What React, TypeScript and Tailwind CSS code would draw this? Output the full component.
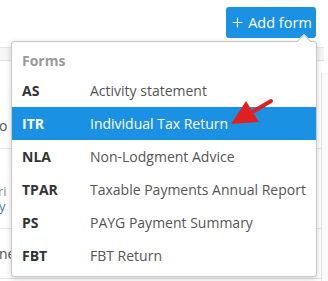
import { Plus } from "lucide-react";

const FORMS = [
  { code: "AS", label: "Activity statement" },
  { code: "ITR", label: "Individual Tax Return", active: true },
  { code: "NLA", label: "Non-Lodgment Advice" },
  { code: "TPAR", label: "Taxable Payments Annual Report" },
  { code: "PS", label: "PAYG Payment Summary" },
  { code: "FBT", label: "FBT Return" },
];

function Arrow() {
  return (
    <svg className="absolute left-[226px] top-[94px]" width="52" height="36" viewBox="0 0 52 36">
      <line x1="45" y1="7" x2="28" y2="17" stroke="#e0201f" strokeWidth="4" strokeLinecap="round" />
      <polygon points="5,30 20,7 33,28" fill="#e0201f" />
    </svg>
  );
}

export default function App() {
  return (
    <div
      className="relative h-[281px] w-[328px] overflow-hidden bg-white text-[#555]"
      style={{ fontFamily: '"Open Sans", sans-serif' }}
    >
      {/* page behind the menu */}
      <div className="flex h-[47px] justify-end pr-[12px] pt-[7px]">
        <button className="flex h-[31px] w-[90px] items-center justify-center gap-[3px] rounded-[3px] bg-[#1a91e3] text-[14.5px] text-white">
          <Plus className="h-[15px] w-[15px]" strokeWidth={1.8} />
          Add form
        </button>
      </div>
      <div className="mr-[4px] h-[14px] border-y border-[#e3e3e3] bg-[#f6f6f6]" />
      <div className="flex">
        <div className="flex-1">
          <div className="flex h-[87px] items-end pb-[15px] text-[14px] leading-none">
            <span className="-ml-[1px]">o</span>
          </div>
          <div className="flex h-[81px] flex-col justify-end border-y border-[#e3e3e3] pb-[14px] text-[13px] leading-[15px]">
            <span className="-ml-[2px] text-[#888]">ri</span>
            <span className="-ml-[1px] text-[#4a7cb0]">y</span>
          </div>
          <div className="flex h-[50px] items-center border-b border-[#e3e3e3] text-[14px]">
            <span className="-ml-[1px]">ne</span>
          </div>
        </div>
        <div className="mt-[12px] h-[240px] w-[7px] border-l border-[#e6e6e6] bg-[#fafafa]" />
      </div>

      {/* dropdown */}
      <div className="absolute left-[11px] top-[41px] w-[306px] rounded-[3px] border border-[#c8c8c8] bg-white shadow-[0_2px_6px_rgba(0,0,0,0.18)]">
        <div className="absolute -top-[6px] right-[7px] h-[10px] w-[10px] rotate-45 border-l border-t border-[#c8c8c8] bg-white" />
        <div className="flex h-[32px] items-center px-[10px] pt-[4px] text-[14px] font-bold text-[#9a9a9a]">Forms</div>
        <ul className="pb-[4px] text-[14px]">
          {FORMS.map((f) => (
            <li
              key={f.code}
              className={
                f.active
                  ? "flex h-[33px] items-center bg-[#1a91e3] px-[10px] text-white"
                  : "flex h-[33px] items-center px-[10px]"
              }
            >
              <span className={f.active ? "w-[68px] font-bold" : "w-[68px] font-bold text-[#333]"}>{f.code}</span>
              <span>{f.label}</span>
            </li>
          ))}
        </ul>
      </div>
      <Arrow />
    </div>
  );
}
